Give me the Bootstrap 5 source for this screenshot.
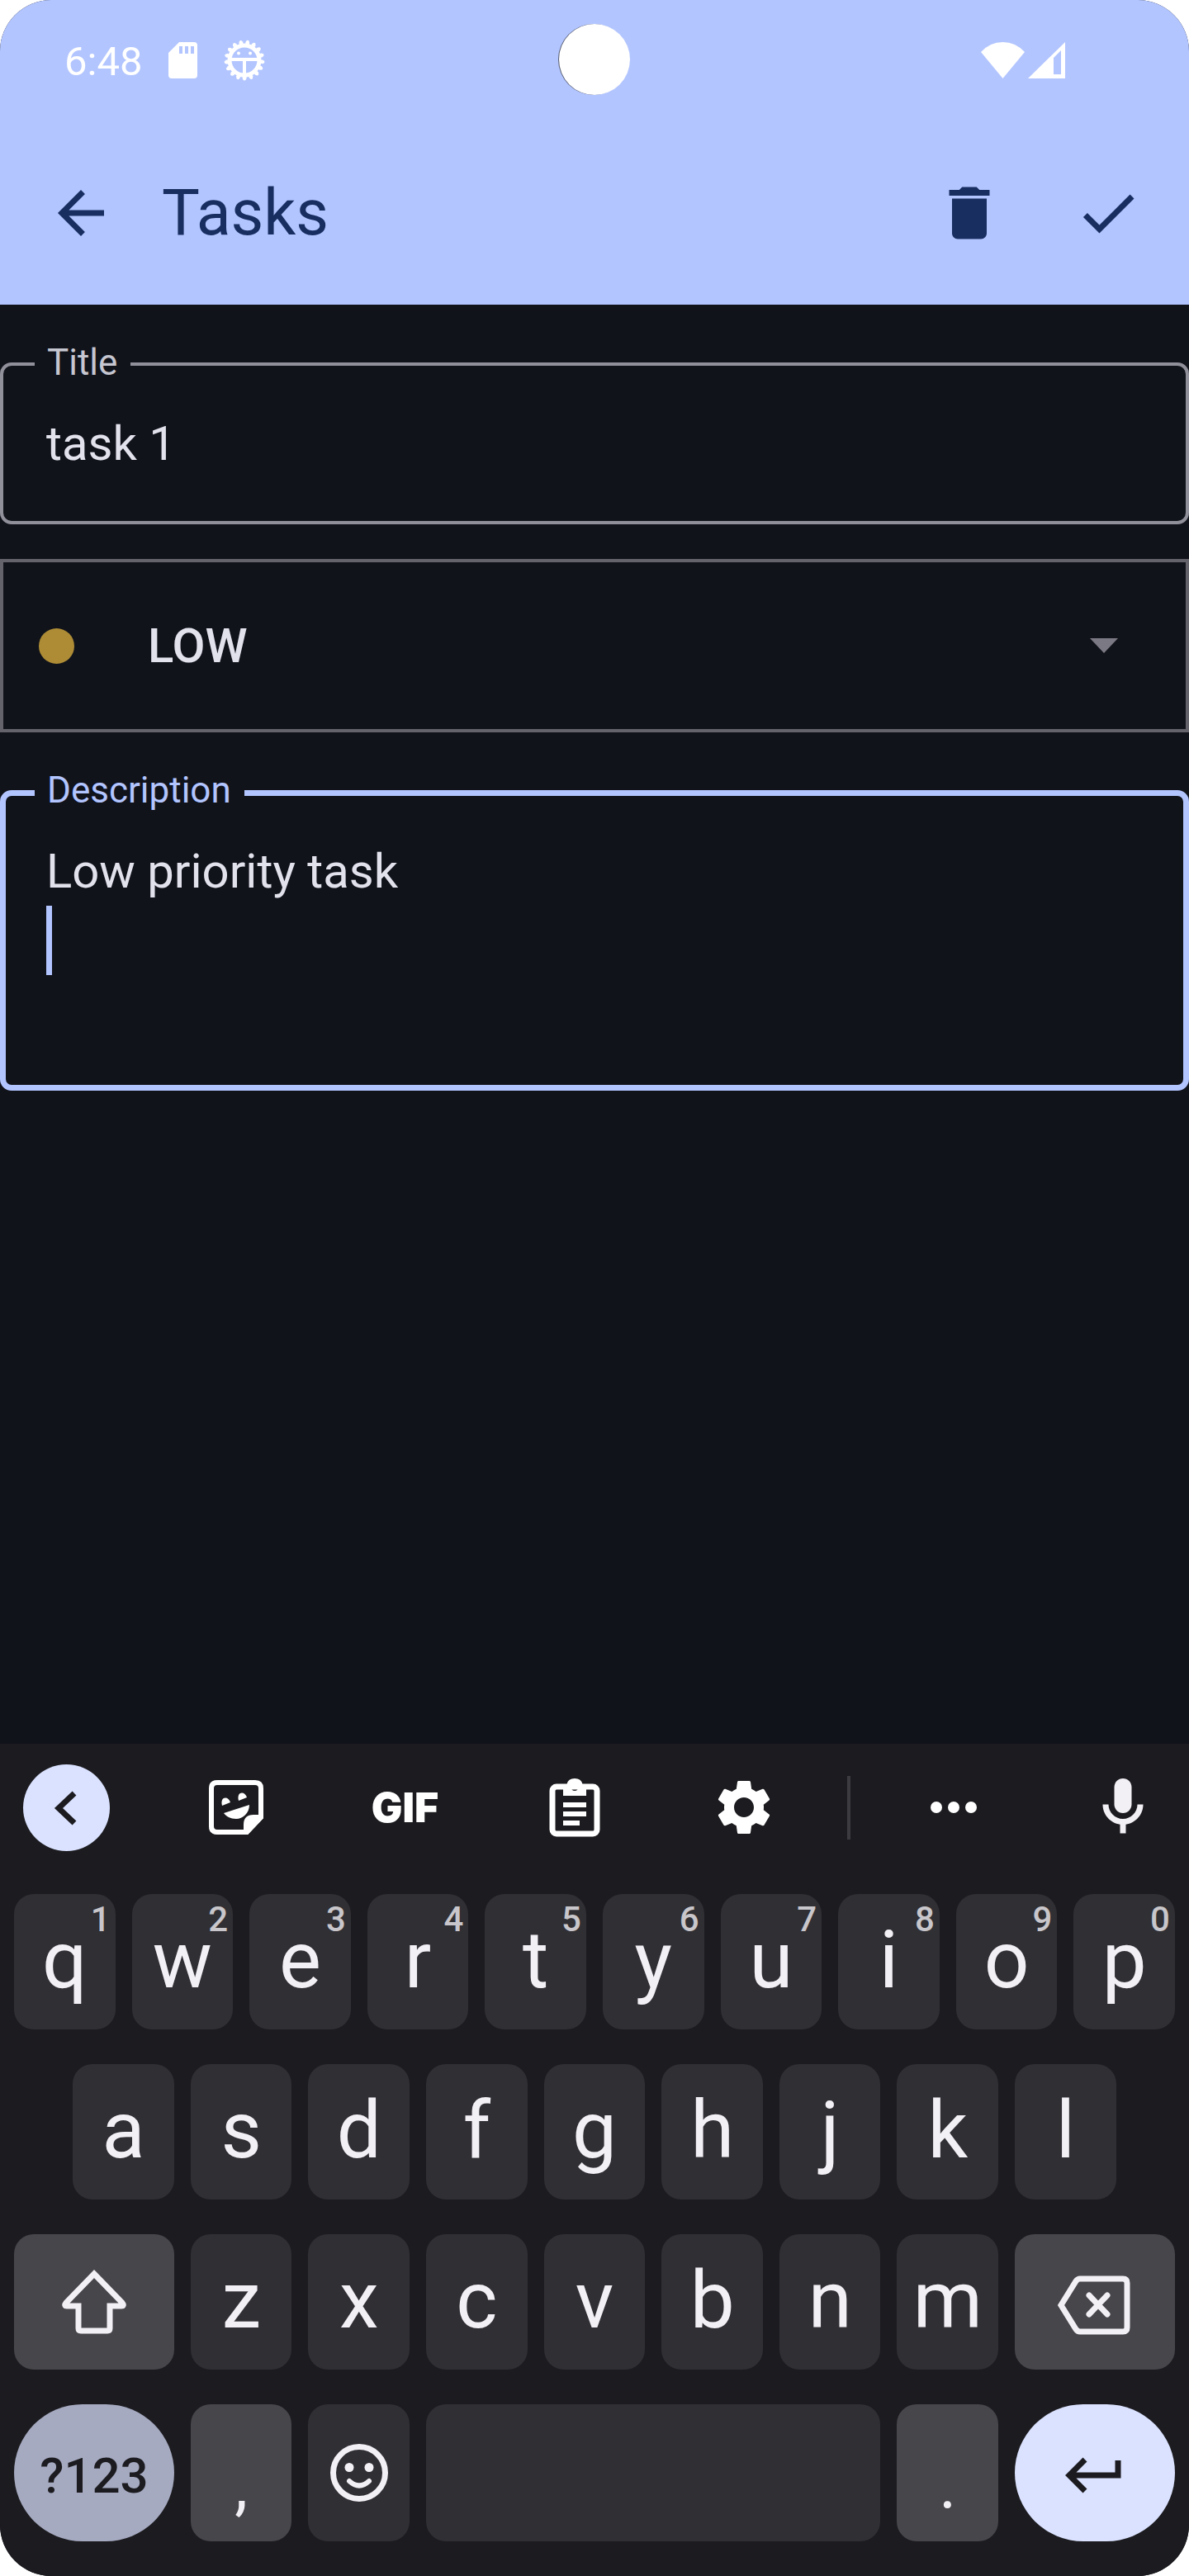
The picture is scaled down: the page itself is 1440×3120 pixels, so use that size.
<!DOCTYPE html>
<html lang="en">
<head>
<meta charset="utf-8">
<meta name="viewport" content="width=device-width, initial-scale=1">
<title>Tasks</title>
<link href="https://cdn.jsdelivr.net/npm/bootstrap@5.3.0/dist/css/bootstrap.min.css" rel="stylesheet">
<style>
  :root { --accent: #b2c5ff; --ink: #182e60; --surface: #11131b; --on-surface: #e2e2ec; --pale: #dae2ff; --kb: #1c1b1f; --key: #302f34; --key-alt: #47464a; --key-text: #f2eff5; }
  body { background: #fff; font-family: Roboto, "Liberation Sans", sans-serif; }
  svg { display: block; flex: none; }
  .device { background: var(--surface); border-radius: 62px; }
  .top-area { background: var(--accent); }
  .status { height: 146px; padding: 0 150px 0 78px; font-size: 49px; line-height: 58px; }
  .status-left { gap: 32px; }
  .clock { padding-top: 4px; }
  .camera { width: 86px; height: 86px; top: 29px; box-shadow: -1px 0 0 #555b70; }
  .app-bar { height: 223px; padding: 0 56px; color: var(--ink); }
  .app-bar h1 { font-size: 77px; line-height: 98px; margin-left: 56px; }
  .app-actions { gap: 84px; }
  .form-area { padding-top: 70px; }
  .outlined > .form-control, .outlined > .form-select { background: transparent; color: var(--on-surface); font-size: 58px; line-height: 84px; box-shadow: none; resize: none; overflow: hidden; }
  .outlined > .form-control { border: 4px solid #90909a; border-radius: 14px; padding: 52px; height: 196px; }
  .outlined > textarea.form-control { border: 7px solid var(--accent); height: 364px; padding: 49px; }
  .outlined > .form-select { border: 4px solid #64636b; border-radius: 0; height: 210px; padding: 0 175px; font-weight: 500; }
  .outlined > .form-select option { background: var(--surface); }
  .float-label { left: 42px; top: -28px; padding: 0 16px 0 15px; font-size: 44px; line-height: 56px; background: var(--surface); color: #c5c6d0; }
  .float-label.active-label { color: var(--accent); }
  .level-dot { left: 47px; width: 43px; height: 43px; background: #ad8c35; }
  .drop-arrow { right: 86px; }
  .text-caret { left: 56px; top: 140px; width: 7px; height: 84px; background: var(--accent); }
  .gap-s { margin-top: 42px; }
  .gap-l { margin-top: 70px; }
  .keyboard { background: var(--kb); padding-bottom: 42px; }
  .tools { height: 182px; padding: 0 28px 28px; }
  .tool-group { gap: 100px; }
  .tool { width: 105px; height: 105px; color: #fff; }
  .tool.gif { font-family: Inter, Roboto, sans-serif; font-size: 50px; font-weight: 900; line-height: 64px; }
  .tool.round { background: var(--pale); color: var(--kb); }
  .tool-rule { width: 4px; height: 77px; background: #3c3b40; margin-right: 72px; }
  .keys { display: grid; grid-template-columns: repeat(20, 1fr); gap: 42px 20px; padding: 0 17px; }
  .keys > .key { grid-column: span 2; height: 164px; border-radius: 24px; background: var(--key); color: var(--key-text); font-size: 96px; line-height: 112px; padding: 0 0 4px; }
  .keys > .first-in { grid-column: 2 / span 2; }
  .keys > .wide { grid-column: span 3; }
  .keys > .space { grid-column: span 8; }
  .keys > .next-row { grid-column: 1 / span 3; }
  .keys > .alt { background: var(--key-alt); }
  .keys > .low { height: 166px; }
  .keys > .icon-key { padding: 0; }
  .keys > .punct { font-size: 80px; padding: 32px 0 0; }
  .keys > .symbols { background: #a5aac1; color: var(--kb); font-size: 60px; font-weight: 500; padding: 8px 0 0; }
  .keys > .enter { background: var(--pale); color: var(--kb); }
  .hint { top: 3px; right: 6px; font-size: 42px; font-weight: 500; line-height: 56px; color: #c8c6ca; }
</style>
<script src="https://cdn.jsdelivr.net/npm/bootstrap@5.3.0/dist/js/bootstrap.bundle.min.js"></script>
</head>
<body>
<div class="device d-flex flex-column min-vh-100 overflow-hidden">
  <header class="top-area position-relative">
    <div class="status d-flex align-items-center justify-content-between text-white">
      <div class="status-left d-flex align-items-center">
        <span class="clock">6:48</span>
        <svg width="35" height="44" viewBox="0 0 35 44" fill="#fff" fill-rule="evenodd"><path d="M13 0H31q4 0 4 4V40q0 4-4 4H4q-4 0-4-4V13zM13 5v9h4V5zM20 5v9h4V5zM27 5v9h4V5z"/></svg>
        <svg width="50" height="50" viewBox="0 0 50 50" fill="none" stroke="#fff"><circle cx="25" cy="25" r="18" stroke-width="5"/><circle cx="25" cy="25" r="20" stroke-width="5" pathLength="17" stroke-dasharray=".62 .38" stroke-dashoffset=".31" transform="rotate(-80 25 25)"/><circle cx="25" cy="25" r="22.5" stroke-width="4" stroke-linecap="round" pathLength="17" stroke-dasharray="0 1" transform="rotate(-80 25 25)"/><path d="M9 24H41M25 25V42" stroke-width="4"/><circle cx="18" cy="16.500" r="2" fill="#fff" stroke="none"/><circle cx="32" cy="16.500" r="2" fill="#fff" stroke="none"/></svg>
      </div>
      <div class="d-flex align-items-center gap-1">
        <svg width="53" height="44" viewBox="0 0 53 44" fill="#fff"><path d="M0 12Q11 0 26.500 0T53 12L26.500 44z"/></svg>
        <svg width="45" height="44" viewBox="0 0 45 44" fill="#fff" fill-rule="evenodd"><path d="M0 44L45 0V44zM31 19V39H40V10z"/></svg>
      </div>
    </div>
    <div class="camera position-absolute start-50 translate-middle-x rounded-circle bg-white"></div>
    <nav class="app-bar d-flex align-items-center" aria-label="Task">
      <button type="button" class="btn p-0 border-0" aria-label="Back"><svg width="84" height="84" viewBox="0 0 24 24" fill="#182e60"><path d="M20 11H7.830l5.590-5.590L12 4l-8 8 8 8 1.410-1.410L7.830 13H20v-2z"/></svg></button>
      <h1 class="mb-0 fw-normal">Tasks</h1>
      <div class="app-actions d-flex ms-auto">
        <button type="button" class="btn p-0 border-0" aria-label="Delete"><svg width="84" height="84" viewBox="0 0 24 24" fill="#182e60"><path d="M6 19c0 1.100.9 2 2 2h8c1.100 0 2-.9 2-2V7H6v12zM19 4h-3.500l-1-1h-5l-1 1H5v2h14V4z"/></svg></button>
        <button type="button" class="btn p-0 border-0" aria-label="Save"><svg width="84" height="84" viewBox="0 0 24 24" fill="#182e60"><path d="M9 16.170L4.830 12l-1.420 1.410L9 19 21 7l-1.410-1.410z"/></svg></button>
      </div>
    </nav>
  </header>

  <main class="form-area flex-grow-1">
    <div class="outlined position-relative">
      <input id="title" class="form-control" type="text" value="task 1">
      <label for="title" class="float-label position-absolute">Title</label>
    </div>
    <div class="outlined position-relative gap-s d-flex align-items-center">
      <select class="form-select" aria-label="Priority"><option>LOW</option><option>MEDIUM</option><option>HIGH</option></select>
      <span class="level-dot position-absolute rounded-circle"></span>
      <svg class="drop-arrow position-absolute pe-none" width="34" height="18" viewBox="0 0 34 18" fill="#7b7983"><path d="M0 0H34L17 18z"/></svg>
    </div>
    <div class="outlined position-relative gap-l">
      <textarea id="description" class="form-control" rows="3">Low priority task
</textarea>
      <label for="description" class="float-label active-label position-absolute">Description</label>
      <span class="text-caret position-absolute"></span>
    </div>
  </main>

  <section class="keyboard" aria-label="Keyboard">
    <div class="tools d-flex align-items-center justify-content-between">
      <div class="tool-group d-flex">
        <button type="button" class="tool round btn p-0 border-0 rounded-circle" aria-label="Close toolbar"><svg width="105" height="105" viewBox="0 0 105 105" fill="none" stroke="currentColor" stroke-width="7"><path d="M62 35L43 53L62 71"/></svg></button>
        <button type="button" class="tool btn p-0 border-0 d-flex align-items-center justify-content-center" aria-label="Stickers"><svg width="84" height="84" viewBox="0 0 84 84" fill="#fff"><path d="M55 72H19Q12 72 12 65V19Q12 12 19 12H65Q72 12 72 19V54z" fill="none" stroke="#fff" stroke-width="6"/><path d="M51 75V63Q51 51 63 51H75V55L56 75zM27 49L58 39C58 49 50 56 42 56C35 56 30 53 27 49zM25 40C22 28 33 28 35 36zM45 34C42 22 53 22 55 30z"/></svg></button>
        <button type="button" class="tool gif btn p-0 border-0">GIF</button>
        <button type="button" class="tool btn p-0 border-0 d-flex align-items-center justify-content-center" aria-label="Clipboard"><svg width="84" height="84" viewBox="0 0 84 84" fill="#fff" fill-rule="evenodd"><rect x="15" y="17" width="54" height="57" rx="5" fill="none" stroke="#fff" stroke-width="7"/><path d="M28 28V14H32.500Q34 7 42 7T51.500 14H56V28zM42 14a4 4 0 1 0 0 8a4 4 0 1 0 0-8zM28 36H56V42H28zM28 47H56V53H28zM28 58H48V64H28z"/></svg></button>
        <button type="button" class="tool btn p-0 border-0 d-flex align-items-center justify-content-center" aria-label="Settings"><svg width="80" height="80" viewBox="0 0 24 24" fill="#fff"><path d="M19.140 12.940c.04-.3.060-.61.060-.94 0-.32-.02-.64-.07-.94l2.030-1.580c.18-.14.230-.41.120-.61l-1.920-3.320c-.12-.22-.37-.29-.59-.22l-2.390.960c-.5-.38-1.030-.7-1.620-.94l-.36-2.540c-.04-.24-.24-.41-.48-.41h-3.840c-.24 0-.43.170-.47.410l-.36 2.540c-.59.240-1.130.570-1.620.940l-2.390-.96c-.22-.08-.47 0-.59.220L2.740 8.870c-.12.210-.08.470.120.610l2.030 1.580c-.05.3-.09.630-.09.940s.02.640.070.940l-2.030 1.580c-.18.140-.23.410-.12.610l1.920 3.320c.12.220.37.290.59.220l2.390-.96c.5.380 1.030.7 1.620.940l.36 2.540c.05.240.24.410.48.410h3.840c.24 0 .44-.17.470-.41l.36-2.540c.59-.24 1.130-.56 1.620-.94l2.390.960c.22.080.47 0 .59-.22l1.920-3.320c.12-.22.070-.47-.12-.61l-2.010-1.580zM12 15.600c-1.980 0-3.600-1.620-3.600-3.600s1.620-3.600 3.600-3.600 3.600 1.620 3.600 3.600-1.620 3.600-3.600 3.600z"/></svg></button>
      </div>
      <div class="d-flex align-items-center">
        <span class="tool-rule"></span>
        <div class="tool-group d-flex">
          <button type="button" class="tool btn p-0 border-0 d-flex align-items-center justify-content-center" aria-label="More"><svg width="56" height="14" viewBox="0 0 56 14" fill="#fff"><circle cx="7" cy="7" r="7"/><circle cx="28" cy="7" r="7"/><circle cx="49" cy="7" r="7"/></svg></button>
          <button type="button" class="tool btn p-0 border-0 d-flex align-items-center justify-content-center" aria-label="Voice input"><svg width="84" height="84" viewBox="0 0 24 24" fill="#f2eff5"><path d="M12 14c1.660 0 3-1.340 3-3V5c0-1.660-1.340-3-3-3S9 3.340 9 5v6c0 1.660 1.340 3 3 3z"/><path d="M17 11c0 2.760-2.240 5-5 5s-5-2.240-5-5H5c0 3.530 2.610 6.430 6 6.920V21h2v-3.080c3.390-.49 6-3.390 6-6.920h-2z"/></svg></button>
        </div>
      </div>
    </div>

    <div class="keys">
      <button type="button" class="key btn border-0 position-relative">q<span class="hint position-absolute">1</span></button>
      <button type="button" class="key btn border-0 position-relative">w<span class="hint position-absolute">2</span></button>
      <button type="button" class="key btn border-0 position-relative">e<span class="hint position-absolute">3</span></button>
      <button type="button" class="key btn border-0 position-relative">r<span class="hint position-absolute">4</span></button>
      <button type="button" class="key btn border-0 position-relative">t<span class="hint position-absolute">5</span></button>
      <button type="button" class="key btn border-0 position-relative">y<span class="hint position-absolute">6</span></button>
      <button type="button" class="key btn border-0 position-relative">u<span class="hint position-absolute">7</span></button>
      <button type="button" class="key btn border-0 position-relative">i<span class="hint position-absolute">8</span></button>
      <button type="button" class="key btn border-0 position-relative">o<span class="hint position-absolute">9</span></button>
      <button type="button" class="key btn border-0 position-relative">p<span class="hint position-absolute">0</span></button>

      <button type="button" class="key first-in btn border-0">a</button>
      <button type="button" class="key btn border-0">s</button>
      <button type="button" class="key btn border-0">d</button>
      <button type="button" class="key btn border-0">f</button>
      <button type="button" class="key btn border-0">g</button>
      <button type="button" class="key btn border-0">h</button>
      <button type="button" class="key btn border-0">j</button>
      <button type="button" class="key btn border-0">k</button>
      <button type="button" class="key btn border-0">l</button>

      <button type="button" class="key next-row alt icon-key btn border-0 d-flex align-items-center justify-content-center" aria-label="Shift"><svg width="84" height="84" viewBox="0 0 84 84" fill="none" stroke="currentColor" stroke-width="7"><path d="M42 8L76 43Q79 47 75 47H61V74Q61 77 58 77H26Q23 77 23 74V47H9Q5 47 8 43Z"/></svg></button>
      <button type="button" class="key btn border-0">z</button>
      <button type="button" class="key btn border-0">x</button>
      <button type="button" class="key btn border-0">c</button>
      <button type="button" class="key btn border-0">v</button>
      <button type="button" class="key btn border-0">b</button>
      <button type="button" class="key btn border-0">n</button>
      <button type="button" class="key btn border-0">m</button>
      <button type="button" class="key wide alt icon-key btn border-0 d-flex align-items-center justify-content-center" aria-label="Backspace"><svg width="96" height="84" viewBox="0 0 96 84" fill="none" stroke="currentColor" stroke-width="7"><path d="M30 14H82Q87 14 87 19V73Q87 78 82 78H30Q27 78 25 75L7 46L25 17Q27 14 30 14z"/><path d="M41 34L63 57M63 34L41 57" stroke-linecap="round"/></svg></button>

      <button type="button" class="key next-row low symbols btn border-0 rounded-pill">?123</button>
      <button type="button" class="key low alt punct btn border-0">,</button>
      <button type="button" class="key low icon-key btn border-0 d-flex align-items-center justify-content-center" aria-label="Emoji"><svg width="84" height="84" viewBox="0 0 84 84" fill="none" stroke="currentColor" stroke-width="7"><circle cx="42" cy="42" r="31.500"/><path d="M30 52Q42 63 54 52" stroke-width="6" stroke-linecap="round"/><circle cx="30" cy="35.500" r="5.500" fill="currentColor" stroke="none"/><circle cx="54" cy="35.500" r="5.500" fill="currentColor" stroke="none"/></svg></button>
      <button type="button" class="key low space btn border-0" aria-label="Space"></button>
      <button type="button" class="key low alt punct btn border-0">.</button>
      <button type="button" class="key low wide enter icon-key btn border-0 rounded-pill d-flex align-items-center justify-content-center" aria-label="Enter"><svg width="84" height="84" viewBox="0 0 84 84" fill="none" stroke="currentColor" stroke-width="7"><path d="M30 26L11 45L30 64M11 45H70V27"/></svg></button>
    </div>
  </section>
</div>
</body>
</html>
